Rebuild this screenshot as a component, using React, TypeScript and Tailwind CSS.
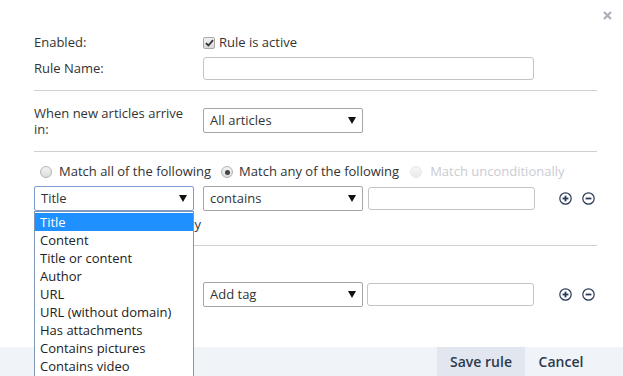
import React from 'react';

const options = [
  'Title',
  'Content',
  'Title or content',
  'Author',
  'URL',
  'URL (without domain)',
  'Has attachments',
  'Contains pictures',
  'Contains video',
];

function Arrow() {
  return (
    <svg width="8" height="7" viewBox="0 0 8 7" className="shrink-0">
      <path d="M0 0 H8 L4 7 Z" fill="#111" />
    </svg>
  );
}

function Select({ value, width, focused }: { value: string; width: string; focused?: boolean }) {
  return (
    <div
      className={`flex h-[25px] ${width} items-center justify-between rounded-[2px] border bg-white pl-[6px] pr-[6px] ${
        focused ? 'border-[#7c9bd0]' : 'border-[#a6a6a6]'
      }`}
    >
      <span>{value}</span>
      <Arrow />
    </div>
  );
}

function Radio({ checked, disabled }: { checked?: boolean; disabled?: boolean }) {
  return (
    <span
      className={`flex h-[12px] w-[12px] shrink-0 items-center justify-center rounded-full border bg-gradient-to-b from-[#f4f4f4] to-[#dcdcdc] ${
        disabled ? 'border-[#d8d8d8] opacity-60' : 'border-[#b3b3b3]'
      }`}
    >
      {checked && <span className="h-[5px] w-[5px] rounded-full bg-[#444]" />}
    </span>
  );
}

function RoundIcon({ minus }: { minus?: boolean }) {
  return (
    <svg width="13" height="13" viewBox="0 0 13 13">
      <circle cx="6.5" cy="6.5" r="5.7" fill="none" stroke="#2b3a55" strokeWidth="1.2" />
      <path d="M3.6 6.5 H9.4" stroke="#2b3a55" strokeWidth="1.8" />
      {!minus && <path d="M6.5 3.6 V9.4" stroke="#2b3a55" strokeWidth="1.8" />}
    </svg>
  );
}

export default function App() {
  return (
    <div
      className="relative flex h-[376px] w-[623px] flex-col overflow-hidden bg-white text-[13px] text-[#333]"
      style={{ fontFamily: '"Open Sans", "Liberation Sans", sans-serif' }}
    >
      <div className="flex h-[30px] justify-end pr-[11px] pt-[5px]">
        <svg width="9" height="9" viewBox="0 0 9 9" className="mt-[6px]">
          <path d="M1 1 L8 8 M8 1 L1 8" stroke="#a9b0bb" strokeWidth="2.2" />
        </svg>
      </div>

      <div className="flex flex-col pl-[34px] pr-[26px]">
        <div className="mt-[4px] flex h-[18px] items-center">
          <span className="w-[169px]">Enabled:</span>
          <span className="flex h-[12px] w-[12px] items-center justify-center rounded-[2px] border border-[#a9a9a9] bg-gradient-to-b from-[#f2f2f2] to-[#d9d9d9]">
            <svg width="9" height="8" viewBox="0 0 9 8">
              <path d="M1 4.2 L3.4 6.5 L8 1.2" fill="none" stroke="#333" strokeWidth="1.8" />
            </svg>
          </span>
          <span className="ml-[4px]">Rule is active</span>
        </div>

        <div className="mt-[5px] flex items-center">
          <span className="w-[169px]">Rule Name:</span>
          <div className="h-[23px] w-[331px] rounded-[3px] border border-[#c4c4c4] bg-white" />
        </div>

        <div className="mt-[10px] border-t border-[#d0d0d0]" />

        <div className="mt-[13px] flex h-[33px] items-center">
          <span className="w-[169px] shrink-0 pr-[12px] leading-[16px]">When new articles arrive in:</span>
          <Select value="All articles" width="w-[160px]" />
        </div>

        <div className="mt-[14px] border-t border-[#d0d0d0]" />

        <div className="mt-[11px] flex h-[18px] items-center pl-[6px]">
          <Radio />
          <span className="ml-[7px]">Match all of the following</span>
          <span className="ml-[10px]">
            <Radio checked />
          </span>
          <span className="ml-[6px]">Match any of the following</span>
          <span className="ml-[11px]">
            <Radio disabled />
          </span>
          <span className="ml-[8px] text-[#c9ccd2]">Match unconditionally</span>
        </div>

        <div className="mt-[5px] flex items-center">
          <div className="relative">
            <Select value="Title" width="w-[160px]" focused />
            <div className="absolute left-0 top-[25px] z-10 w-[160px] border border-[#7f97b5] bg-white py-[1px]">
              {options.map((o, i) => (
                <div
                  key={o}
                  className={`h-[18px] pl-[5px] leading-[18px] ${i === 0 ? 'bg-[#1e90ff] text-white' : 'text-[#222]'}`}
                >
                  {o}
                </div>
              ))}
            </div>
          </div>
          <div className="ml-[9px]">
            <Select value="contains" width="w-[160px]" />
          </div>
          <div className="ml-[5px] h-[23px] w-[167px] rounded-[3px] border border-[#c4c4c4] bg-white" />
          <div className="ml-[24px] flex gap-[10px]">
            <RoundIcon />
            <RoundIcon minus />
          </div>
        </div>

        <div className="mt-[5px] flex h-[18px] w-[167px] items-center justify-end">
          <span>Apply retroactively</span>
        </div>

        <div className="mt-[11px] border-t border-[#d0d0d0]" />

        <div className="mt-[36px] flex items-center">
          <div className="h-[24px] w-[160px] rounded-[2px] border border-[#a6a6a6] bg-white" />
          <div className="ml-[9px]">
            <Select value="Add tag" width="w-[160px]" />
          </div>
          <div className="ml-[4px] h-[23px] w-[167px] rounded-[3px] border border-[#c4c4c4] bg-white" />
          <div className="ml-[25px] flex gap-[10px]">
            <RoundIcon />
            <RoundIcon minus />
          </div>
        </div>
      </div>

      <div className="mt-auto flex h-[29px] items-stretch justify-end bg-[#f0f3f8] pr-[26px] text-[14px] font-semibold text-[#2c3a50]">
        <div className="flex w-[88px] items-center justify-center bg-[#e2e7ef]">Save rule</div>
        <div className="flex w-[72px] items-center justify-center">Cancel</div>
      </div>
    </div>
  );
}
